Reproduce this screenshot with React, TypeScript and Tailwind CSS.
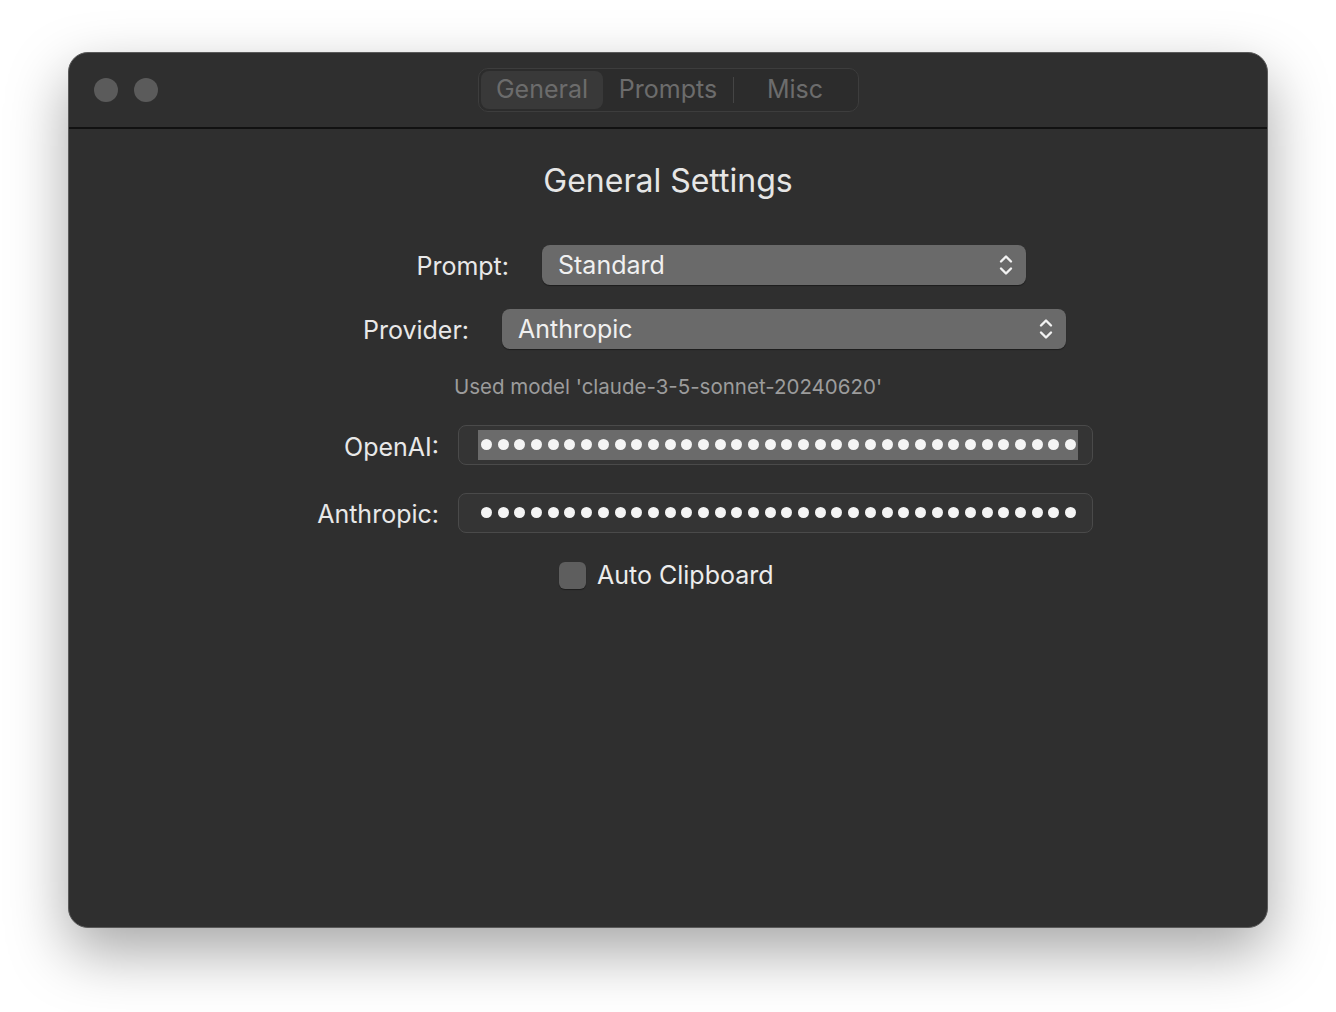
import React from "react";

const font = { fontFamily: "Inter, 'Noto Sans', 'Liberation Sans', sans-serif" };

const Chevrons = () => (
  <svg width="16" height="26" viewBox="0 0 16 26" fill="none" stroke="#f2f2f2" strokeWidth="2.4" strokeLinecap="round" strokeLinejoin="round">
    <path d="M3 9.5 L8 4.5 L13 9.5" />
    <path d="M3 16.5 L8 21.5 L13 16.5" />
  </svg>
);

const Dots = ({ count }: { count: number }) => (
  <div className="flex gap-[5.7px]">
    {Array.from({ length: count }).map((_, i) => (
      <span key={i} className="block w-[11px] h-[11px] rounded-full bg-[#f4f4f4]" />
    ))}
  </div>
);

const PopUp = ({ value, width }: { value: string; width: string }) => (
  <div className={`${width} h-[40px] rounded-[8px] bg-[#6a6a6a] shadow-[0_1px_1px_rgba(0,0,0,0.4)] flex items-center justify-between pl-[16px] pr-[12px]`}>
    <span className="text-[25px] text-[#f0f0f0] leading-none">{value}</span>
    <Chevrons />
  </div>
);

const App = () => {
  return (
    <div className="w-[1336px] h-[1012px] bg-white pt-[52px] pl-[68px]" style={font}>
      <div className="w-[1200px] h-[876px] rounded-[20px] bg-[#2f2f2f] border border-[#5a5a5a] shadow-[0_24px_60px_rgba(0,0,0,0.35)] overflow-hidden flex flex-col">
        {/* title bar */}
        <div className="h-[76px] flex items-center border-b-2 border-[#111] relative">
          <div className="flex gap-[16px] pl-[25px]">
            <span className="block w-[24px] h-[24px] rounded-full bg-[#5b5b5b]" />
            <span className="block w-[24px] h-[24px] rounded-full bg-[#5b5b5b]" />
          </div>
          <div className="absolute left-[409px] top-[15px] w-[381px] h-[44px] rounded-[10px] border border-[#3d3d3d] bg-[#2c2c2c] flex items-center p-[2px] text-[25px] text-[#6c6c6c]">
            <div className="w-[122px] h-full rounded-[8px] bg-[#393939] flex items-center justify-center">General</div>
            <div className="w-[130px] h-full flex items-center justify-center">Prompts</div>
            <div className="w-px h-[26px] bg-[#454545]" />
            <div className="flex-1 h-full flex items-center justify-center">Misc</div>
          </div>
        </div>

        {/* content */}
        <div className="flex flex-col text-[#e8e8e8]">
          <h1 className="text-center text-[32px] leading-none mt-[36px] text-[#e6e6e6]">General Settings</h1>

          <div className="flex items-center mt-[48px]">
            <div className="w-[440px] text-right text-[25px] leading-none mt-[2px]">Prompt:</div>
            <div className="ml-[33px]"><PopUp value="Standard" width="w-[484px]" /></div>
          </div>

          <div className="flex items-center mt-[24px]">
            <div className="w-[400px] text-right text-[25px] leading-none mt-[2px]">Provider:</div>
            <div className="ml-[33px]"><PopUp value="Anthropic" width="w-[564px]" /></div>
          </div>

          <div className="text-center text-[20.5px] text-[#9c9c9c] mt-[23px]">Used model 'claude-3-5-sonnet-20240620'</div>

          <div className="flex items-center mt-[22px]">
            <div className="w-[370px] text-right text-[25px] leading-none mt-[5px]">OpenAI:</div>
            <div className="ml-[19px] w-[635px] h-[40px] rounded-[8px] bg-[#343434] border border-[#4a4a4a] flex items-center pl-[19px]">
              <div className="h-[30px] w-[600px] bg-[#6b6b6b] flex items-center pl-[3px]">
                <Dots count={36} />
              </div>
            </div>
          </div>

          <div className="flex items-center mt-[28px]">
            <div className="w-[370px] text-right text-[25px] leading-none mt-[4px]">Anthropic:</div>
            <div className="ml-[19px] w-[635px] h-[40px] rounded-[8px] bg-[#343434] border border-[#4a4a4a] flex items-center pl-[22px]">
              <Dots count={36} />
            </div>
          </div>

          <div className="flex items-center mt-[24px] pl-[490px]">
            <span className="block w-[27px] h-[27px] rounded-[6px] bg-[#5e5e5e] shadow-[0_1px_1px_rgba(0,0,0,0.4)]" />
            <span className="ml-[11px] text-[25px] text-[#ececec]">Auto Clipboard</span>
          </div>
        </div>
      </div>
    </div>
  );
};

export default App;
